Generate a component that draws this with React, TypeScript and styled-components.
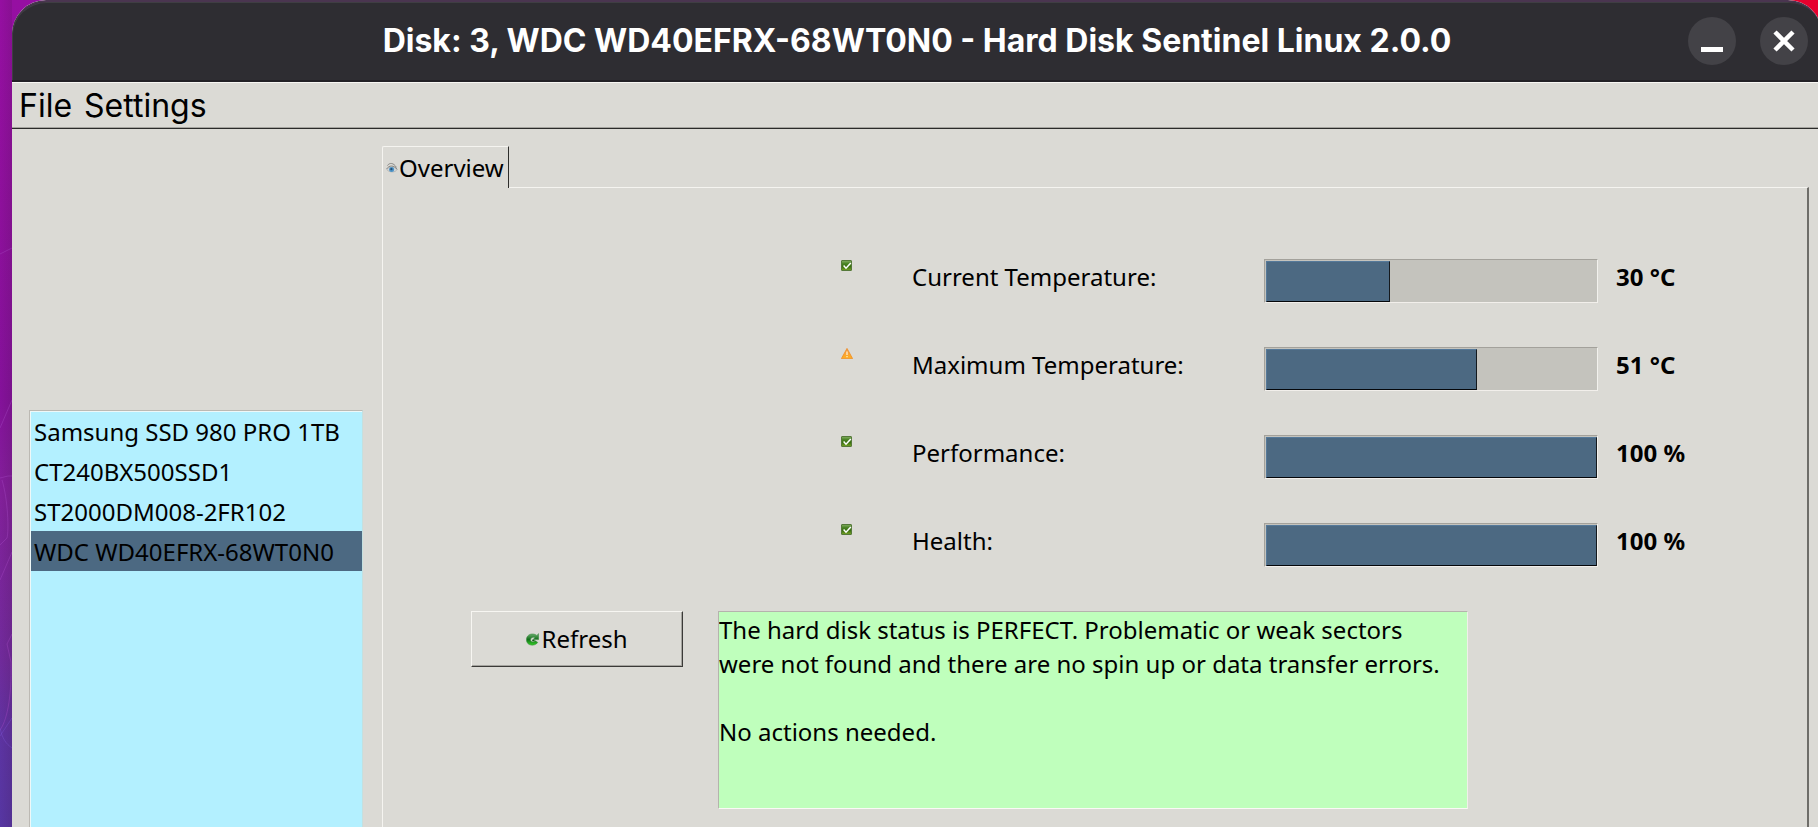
import React from "react";
import styled, { createGlobalStyle } from "styled-components";

const face = "#dbdad5";
const accent = "#4c6982";

const GlobalStyle = createGlobalStyle`
  *, *::before, *::after { box-sizing: border-box; }
  body { margin: 0; overflow: hidden; }
  button, textarea { font: inherit; color: inherit; margin: 0; }
`;

const Desktop = styled.div`
  display: flex;
  height: 100vh;
  overflow: hidden;
  background:
    linear-gradient(90deg, transparent 97%, #e6002e 98%) 0 0 / 100% 60px no-repeat,
    linear-gradient(90deg, transparent, rgba(60, 20, 60, 0.15) 12px) 0 0 / 12px 100% no-repeat,
    linear-gradient(180deg, #960fa2 0%, #8e109c 25%, #84119a 48%, #82209a 60%, #702b9b 80%, #5c34a2 90%, #5636a2 100%);
  font: 24px/34px "Noto Sans", sans-serif;
  color: #000;
`;

const Wallpaper = styled.div`
  flex: 0 0 12px;
  svg { display: block; }
`;

const Window = styled.div`
  display: flex;
  flex-direction: column;
  flex: 1;
  margin-right: -4px;
  border-radius: 34px 34px 0 0;
  overflow: hidden;
  background: ${face};
`;

const TitleBar = styled.header`
  display: grid;
  grid-template-columns: 1fr auto 1fr;
  align-items: center;
  height: 82px;
  padding: 0 14px 1px;
  border-top: 2px solid #4a3550;
  border-bottom: 2px solid #222025;
  border-radius: 34px 34px 0 0;
  background: #2e2d32;
  box-shadow: inset 1px 1px #3f3e43;
`;

const Title = styled.h1`
  grid-column: 2;
  margin: 0;
  font: 700 32px/40px Inter, sans-serif;
  color: #fff;
  white-space: nowrap;
`;

const WindowControls = styled.div`
  display: flex;
  justify-content: flex-end;
  gap: 24px;
`;

const WindowButton = styled.button`
  width: 48px;
  height: 48px;
  padding: 0;
  border: 0;
  border-radius: 50%;
  background: #434247;
  svg { display: block; }
`;

const MenuBar = styled.nav`
  display: flex;
  gap: 12px;
  height: 47px;
  padding: 0 7px;
  border-top: 1px solid #f7f6f2;
  border-bottom: 1px solid #2b2b2a;
  box-shadow: inset 0 -1px #a5a49f;
`;

const MenuButton = styled.button`
  padding: 0;
  border: 0;
  background: none;
  font: 400 32px/44px Inter, sans-serif;
`;

const Body = styled.div`
  display: flex;
  flex: 1;
  min-height: 0;
  padding: 17px 13px 0 17px;
  gap: 19px;
`;

const DiskList = styled.ul`
  flex: 0 0 334px;
  margin: 264px 0 0;
  padding: 0;
  list-style: none;
  border: 1px solid #bcb9b3;
  border-bottom: 0;
  border-right-color: #c4e0e0;
  box-shadow: inset 1px 1px #eef8f8;
  background: #b3f0ff;
`;

const DiskItem = styled.li<{ $selected: boolean }>`
  height: 40px;
  margin-left: 1px;
  padding: 0 3px;
  line-height: 42px;
  white-space: nowrap;
  background: ${(p) => (p.$selected ? accent : "transparent")};
`;

const Tabs = styled.main`
  display: flex;
  flex: 1;
  flex-direction: column;
  min-width: 0;
`;

const Tab = styled.button`
  display: flex;
  align-items: center;
  align-self: flex-start;
  gap: 1px;
  height: 42px;
  margin-bottom: -1px;
  padding: 0 4px 0 3px;
  border: 1px solid #f5f4f0;
  border-right: 1px solid #2e2e2c;
  border-bottom: 0;
  border-radius: 2px 0 0 0;
  background: ${face};
  z-index: 1;
`;

const Panel = styled.section`
  flex: 1;
  padding: 71px 0 0;
  border: 1px solid #f5f4f0;
  border-right: 2px solid #6e6d69;
  border-bottom: 0;
`;

const Gauges = styled.div`
  display: grid;
  gap: 44px;
`;

const GaugeRow = styled.div`
  display: grid;
  grid-template-columns: 458fr 71fr 352fr 334fr 209fr;
  height: 44px;
`;

const GaugeIcon = styled.span`
  grid-column: 2;
  padding-top: 1px;
  svg { display: block; }
`;

const GaugeLabel = styled.span`
  line-height: 36px;
  white-space: nowrap;
`;

const Track = styled.div`
  padding: 1px 0 0 1px;
  border: 1px solid #a3a19b;
  border-right-color: #f2f1ed;
  border-bottom-color: #f2efeb;
  background: #c4c3bd;
`;

const Fill = styled.div`
  height: 100%;
  border: 1px solid #55799a;
  border-right-color: #15191d;
  border-bottom-color: #05070a;
  background: ${accent};
`;

const GaugeValue = styled.strong`
  padding-left: 18px;
  line-height: 36px;
  white-space: nowrap;
`;

const StatusRow = styled.div`
  display: grid;
  grid-template-columns: 88fr 212fr 35fr 750fr 339fr;
  align-items: start;
  margin-top: 44px;
`;

const RefreshButton = styled.button`
  grid-column: 2;
  display: flex;
  align-items: center;
  justify-content: center;
  gap: 2px;
  height: 56px;
  padding: 0;
  border: 1px solid #f7f6f2;
  border-right-color: #3b3a38;
  border-bottom-color: #3b3a38;
  box-shadow: inset -1px -1px #a5a49f;
  background: ${face};
`;

const StatusText = styled.textarea`
  grid-column: 4;
  display: block;
  width: 100%;
  height: 198px;
  padding: 1px 12px 1px 0;
  border: 1px solid #b5b3ad;
  border-bottom-color: #faf9f6;
  border-right-color: #f0f0ea;
  border-radius: 0;
  outline: 0;
  resize: none;
  overflow: hidden;
  background: #bfffbc;
`;

const WallpaperLines = () => (
  <svg width="12" height="827" viewBox="0 0 12 827" fill="none" stroke="#a548c4" strokeOpacity=".4" aria-hidden="true">
    <path d="M0 254L12 248M12 400L0 428M0 478L8 476L12 476M2 480C8 500 9 530 7 538L0 545M12 552L0 580M12 634L7 644L11 662C12 700 6 722 0 730" />
    <path d="M0 736L12 718M0 728C2 738 6 744 12 748" stroke="#7a52d0" />
  </svg>
);

const EyeIcon = () => (
  <svg width="12" height="12" viewBox="0 0 12 12" fill="none" aria-hidden="true">
    <path d="M.8 7.600C2.500 4.600 8 4 11 7.400C10 10.600 3.500 11 .8 7.600Z" fill="#d3d7d9" stroke="#adadaa" strokeWidth=".7" />
    <path d="M1.400 3.600C3.500 .4 7.600 .6 10.400 5.400M.6 7C3 3 8 3 11.200 7.400" stroke="#7f7f7d" strokeWidth=".9" />
    <circle cx="5.600" cy="7.600" r="2.500" fill="#4d93c6" />
    <circle cx="5.400" cy="7.200" r="1.100" fill="#234e75" />
  </svg>
);

const OkIcon = () => (
  <svg width="11" height="11" viewBox="0 0 11 11" fill="none" aria-label="OK" role="img">
    <defs>
      <linearGradient id="ok" x1="0" y1="0" x2="0" y2="1">
        <stop stopColor="#86b065" />
        <stop offset=".3" stopColor="#4c8527" />
        <stop offset=".6" stopColor="#387010" />
        <stop offset="1" stopColor="#7aa427" />
      </linearGradient>
    </defs>
    <rect x=".5" y=".5" width="10" height="10" rx=".5" fill="url(#ok)" stroke="#55793a" />
    <path d="M2.600 5.600L5 8.200L9.800 3" stroke="#fff" strokeWidth="1.500" />
  </svg>
);

const WarnIcon = () => (
  <svg width="12" height="11" viewBox="0 0 12 11" aria-label="Warning" role="img">
    <defs>
      <linearGradient id="warn" x1="0" y1="0" x2="0" y2="1">
        <stop stopColor="#f5964a" />
        <stop offset="1" stopColor="#ffb01f" />
      </linearGradient>
    </defs>
    <path d="M6 .4L11.600 10.600H.4Z" fill="url(#warn)" stroke="#ef8b22" strokeWidth=".8" strokeLinejoin="round" />
    <path d="M6 3.600V7M6 8V9.200" stroke="#fff4d8" strokeWidth="1.200" />
  </svg>
);

const RefreshIcon = () => (
  <svg width="13" height="13" viewBox="0 0 13 13" fill="none" aria-hidden="true">
    <defs>
      <linearGradient id="refresh" x1="0" y1="0" x2="0" y2="1">
        <stop stopColor="#6fb072" />
        <stop offset=".5" stopColor="#12701a" />
        <stop offset="1" stopColor="#35cf25" />
      </linearGradient>
    </defs>
    <path
      d="M12.700 .6V6.600H7L8.800 4.800C6.800 3.600 4.600 4.800 4.600 6.800C4.600 9 7.400 9.600 9.400 7.800L11.800 9.400C8.800 13.800 .4 13 .4 6.800C.4 1 7 -.6 10.800 2.400Z"
      fill="url(#refresh)"
      stroke="#3a8a40"
      strokeWidth=".5"
    />
    <path d="M6.200 7.400H8.600" stroke="#125c18" strokeWidth="1.400" />
  </svg>
);

const disks = [
  "Samsung SSD 980 PRO 1TB",
  "CT240BX500SSD1",
  "ST2000DM008-2FR102",
  "WDC WD40EFRX-68WT0N0",
];
const selectedDisk = disks[3];

const gauges = [
  { label: "Current Temperature:", value: 30, max: 80, unit: "°C", ok: true },
  { label: "Maximum Temperature:", value: 51, max: 80, unit: "°C", ok: false },
  { label: "Performance:", value: 100, max: 100, unit: "%", ok: true },
  { label: "Health:", value: 100, max: 100, unit: "%", ok: true },
];

const statusMessage =
  "The hard disk status is PERFECT. Problematic or weak sectors were not found and there are no spin up or data transfer errors.\n\nNo actions needed.";

export default function App() {
  return (
    <Desktop>
      <GlobalStyle />
      <Wallpaper>
        <WallpaperLines />
      </Wallpaper>
      <Window>
        <TitleBar>
          <Title>Disk: 3, {selectedDisk} - Hard Disk Sentinel Linux 2.0.0</Title>
          <WindowControls>
            <WindowButton aria-label="Minimize">
              <svg width="48" height="48" viewBox="0 0 48 48">
                <rect x="13" y="30" width="22" height="5" fill="#fff" />
              </svg>
            </WindowButton>
            <WindowButton aria-label="Close">
              <svg width="48" height="48" viewBox="0 0 48 48">
                <path d="M15 15L33 33M33 15L15 33" stroke="#fff" strokeWidth="4.500" />
              </svg>
            </WindowButton>
          </WindowControls>
        </TitleBar>
        <MenuBar>
          <MenuButton>File</MenuButton>
          <MenuButton>Settings</MenuButton>
        </MenuBar>
        <Body>
          <DiskList role="listbox" aria-label="Disks">
            {disks.map((d) => (
              <DiskItem key={d} role="option" aria-selected={d === selectedDisk} $selected={d === selectedDisk}>
                {d}
              </DiskItem>
            ))}
          </DiskList>
          <Tabs>
            <Tab role="tab" aria-selected="true">
              <EyeIcon />
              Overview
            </Tab>
            <Panel role="tabpanel" aria-label="Overview">
              <Gauges>
                {gauges.map((g, i) => (
                  <GaugeRow key={g.label}>
                    <GaugeIcon>{g.ok ? <OkIcon /> : <WarnIcon />}</GaugeIcon>
                    <GaugeLabel id={`gauge-${i}`}>{g.label}</GaugeLabel>
                    <Track
                      role="progressbar"
                      aria-labelledby={`gauge-${i}`}
                      aria-valuenow={g.value}
                      aria-valuemax={g.max}
                    >
                      <Fill style={{ width: `${(g.value / g.max) * 100}%` }} />
                    </Track>
                    <GaugeValue>
                      {g.value} {g.unit}
                    </GaugeValue>
                  </GaugeRow>
                ))}
              </Gauges>
              <StatusRow>
                <RefreshButton>
                  <RefreshIcon />
                  Refresh
                </RefreshButton>
                <StatusText readOnly aria-label="Disk status" value={statusMessage} />
              </StatusRow>
            </Panel>
          </Tabs>
        </Body>
      </Window>
    </Desktop>
  );
}
